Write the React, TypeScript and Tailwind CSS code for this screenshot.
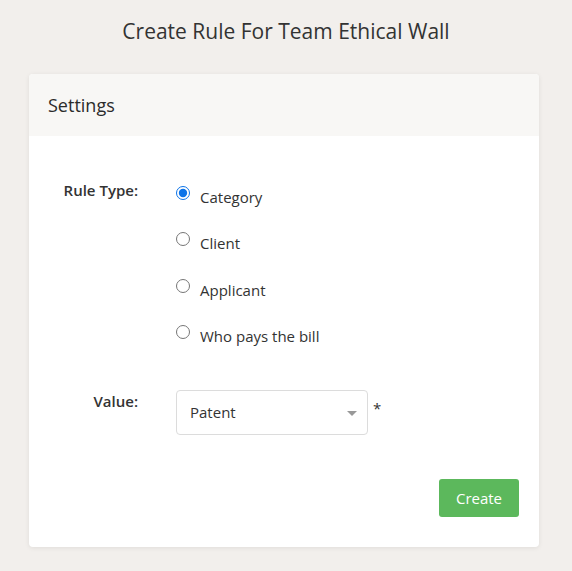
import { useState } from 'react';

const options = ['Category', 'Client', 'Applicant', 'Who pays the bill'];

export default function App() {
  const [ruleType, setRuleType] = useState('Category');

  return (
    <div className="min-h-[571px] bg-[#f2efec] text-[#333] font-['Open_Sans',sans-serif] pt-[17px] pb-[24px]">
      <h1 className="text-center text-[21px] leading-[28px] text-[#333]">Create Rule For Team Ethical Wall</h1>

      <div className="ml-[29px] mt-[29px] w-[510px] rounded-[4px] bg-white shadow-[0_1px_5px_rgba(0,0,0,0.08)] overflow-hidden">
        <div className="h-[62px] bg-[#f8f7f5] pl-[19px] flex items-center">
          <h2 className="text-[18px] leading-[24px] font-medium text-[#2b2b2b]">Settings</h2>
        </div>

        <div className="pt-[51px] pb-[30px]">
          <div className="flex">
            <div className="w-[109px] text-right text-[15px] leading-[20px] font-semibold -mt-[7px]">Rule Type:</div>
            <div className="ml-[38px] flex flex-col gap-[26.4px]">
              {options.map((opt) => (
                <label key={opt} className="flex items-start cursor-pointer">
                  <input
                    type="radio"
                    name="ruleType"
                    checked={ruleType === opt}
                    onChange={() => setRuleType(opt)}
                    className="m-0 -mt-[1px] w-[14px] h-[14px] accent-[#0b73e8]"
                  />
                  <span className="ml-[10px] text-[15px] leading-[20px]">{opt}</span>
                </label>
              ))}
            </div>
          </div>

          <div className="flex mt-[44px]">
            <div className="w-[109px] text-right text-[15px] leading-[20px] font-semibold pt-px">Value:</div>
            <div className="ml-[38px] flex items-start">
              <div className="relative w-[192px] h-[45px] border border-[#dcdcdc] rounded-[4px] flex items-center pl-[13px] text-[15px]">
                <span>Patent</span>
                <span className="absolute right-[10px] top-[20px] w-0 h-0 border-l-[5px] border-r-[5px] border-t-[5px] border-l-transparent border-r-transparent border-t-[#999]"></span>
              </div>
              <span className="ml-[5px] mt-[8px] text-[15px] leading-[20px]">*</span>
            </div>
          </div>

          <div className="flex justify-end mt-[44px] pr-[20px]">
            <button type="button" className="w-[80px] h-[38px] rounded-[3px] bg-[#5cb85c] text-white text-[15px]">
              Create
            </button>
          </div>
        </div>
      </div>
    </div>
  );
}
